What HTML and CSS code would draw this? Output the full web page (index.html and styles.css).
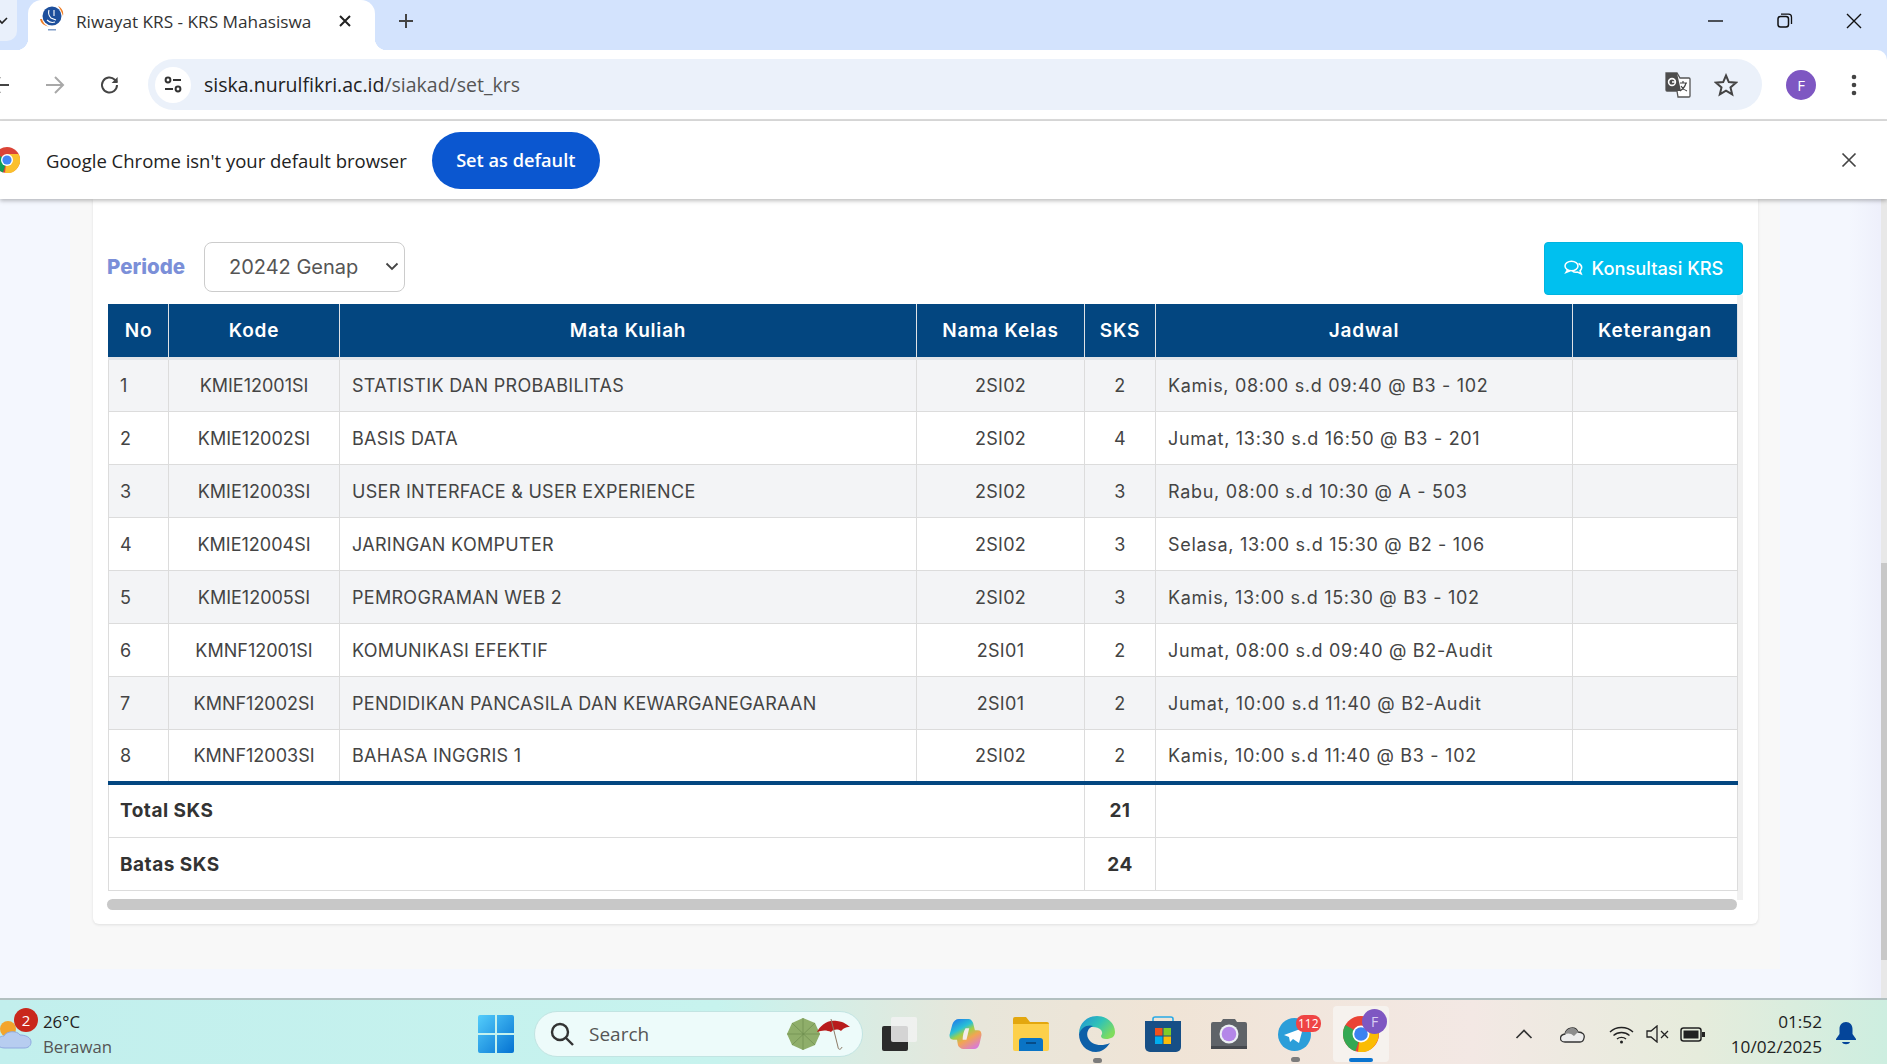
FILE: index.html
```html
<!DOCTYPE html>
<html lang="en">
<head>
    <meta charset="UTF-8">
    <title>Riwayat KRS - KRS Mahasiswa</title>
    <link rel="stylesheet" href="styles.css">
</head>
<body>

<div class="tabstrip">
    <div class="tab-prev"><svg width="12" height="12" viewBox="0 0 12 12"><path d="M-3 3l5 5 5-5" fill="none" stroke="#222" stroke-width="1.6"/></svg></div>
    <div class="tab">
        <svg class="favicon" width="24" height="26" viewBox="0 0 24 26">
            <circle cx="12" cy="10" r="9.5" fill="#1d4f9c"/>
            <path d="M2 13c1 4 4 7 8 8-5-1-9-3-10-8zM18 0c4 2 6 6 5 10-1-3-2-6-5-10z" fill="#ee7b22"/>
            <path d="M9 4c-1 3 0 6 2 8l5 2M14 4v6M7 14c2 2 5 3 8 2" fill="none" stroke="#fff" stroke-width="1.1"/>
            <rect x="8" y="23" width="8" height="1.5" fill="#7f9cc8"/>
        </svg>
        <span class="tab-title">Riwayat KRS - KRS Mahasiswa</span>
        <svg class="tab-close" width="14" height="14" viewBox="0 0 14 14"><path d="M2 2l10 10M12 2L2 12" stroke="#222" stroke-width="2"/></svg>
    </div>
    <svg class="new-tab" width="18" height="18" viewBox="0 0 18 18"><path d="M9 2v14M2 9h14" stroke="#444" stroke-width="2"/></svg>
    <div class="win-controls">
        <svg width="16" height="16" viewBox="0 0 16 16"><path d="M0 8h15" stroke="#111" stroke-width="1.4"/></svg>
        <svg width="16" height="16" viewBox="0 0 16 16"><rect x="1" y="3.5" width="10.5" height="10.5" rx="2.5" fill="none" stroke="#111" stroke-width="1.5"/><path d="M4 1.2h7.5a3 3 0 0 1 3 3V11" fill="none" stroke="#111" stroke-width="1.3"/></svg>
        <svg width="16" height="16" viewBox="0 0 16 16"><path d="M1 1l14 14M15 1L1 15" stroke="#111" stroke-width="1.4"/></svg>
    </div>
</div>

<div class="toolbar">
    <svg class="nav-back" width="22" height="22" viewBox="0 0 22 22"><path d="M-8 11H9M0 3l-8 8 8 8" fill="none" stroke="#444" stroke-width="2"/></svg>
    <svg class="nav-fwd" width="22" height="22" viewBox="0 0 22 22"><path d="M2 11h17M11 3l8 8-8 8" fill="none" stroke="#a8a8a8" stroke-width="2"/></svg>
    <svg class="nav-reload" width="22" height="22" viewBox="0 0 22 22"><path d="M18 11a7.5 7.5 0 1 1-2.2-5.3L18 8" fill="none" stroke="#444" stroke-width="2"/><path d="M18.6 3v6h-6z" fill="#444"/></svg>
    <div class="omnibox">
        <div class="site-info">
            <svg width="20" height="20" viewBox="0 0 20 20" fill="none" stroke="#333" stroke-width="2"><circle cx="5" cy="5" r="2.4"/><path d="M10 5h8M2 14h8"/><circle cx="15" cy="14" r="2.4"/></svg>
        </div>
        <div class="url">siska.nurulfikri.ac.id<span class="url-path">/siakad/set_krs</span></div>
        <svg class="translate" width="26" height="26" viewBox="0 0 26 26">
            <path d="M1 1h11l3 5h9a1 1 0 0 1 1 1v17a1 1 0 0 1-1 1H13l-1-6H2a1 1 0 0 1-1-1z" fill="#fff" stroke="#555" stroke-width="1.3"/>
            <path d="M1 1h11l4 18H2a1 1 0 0 1-1-1z" fill="#4d4d4d"/>
            <circle cx="7" cy="10" r="3.4" fill="none" stroke="#fff" stroke-width="1.6"/>
            <path d="M7 10h3.4" stroke="#fff" stroke-width="1.5"/>
            <path d="M15 11h7M18 9v2M21 11c-1 4-3 6-6 8M16 14c1 2 3 4 6 5" fill="none" stroke="#444" stroke-width="1.2"/>
        </svg>
        <svg class="star" width="24" height="24" viewBox="0 0 24 24"><path d="M12 2.5l2.8 6.6 7.2.6-5.5 4.7 1.7 7-6.2-3.7-6.2 3.7 1.7-7L2 9.7l7.2-.6z" fill="none" stroke="#444" stroke-width="2"/></svg>
    </div>
    <div class="avatar">F</div>
    <svg class="kebab" width="6" height="24" viewBox="0 0 6 24"><circle cx="3" cy="4" r="2.3" fill="#444"/><circle cx="3" cy="12" r="2.3" fill="#444"/><circle cx="3" cy="20" r="2.3" fill="#444"/></svg>
</div>

<div class="infobar">
    <svg class="chrome-logo" width="26" height="26" viewBox="0 0 26 26">
        <circle cx="13" cy="13" r="13" fill="#db4437"/>
        <path d="M13 13L1.7 6.500A13 13 0 0 0 9 25.400z" fill="#0f9d58"/>
        <path d="M13 7h11.500A13 13 0 0 1 11 26z" fill="#fbc02d"/>
        <circle cx="13" cy="13" r="6" fill="#fff"/>
        <circle cx="13" cy="13" r="4.600" fill="#4285f4"/>
    </svg>
    <span class="infobar-text">Google Chrome isn't your default browser</span>
    <button class="btn-default">Set as default</button>
    <svg class="infobar-close" width="16" height="16" viewBox="0 0 16 16"><path d="M1.500 1.500l13 13M14.500 1.500l-13 13" stroke="#444" stroke-width="1.700"/></svg>
</div>

<div class="page">
    <div class="panel">
        <div class="card">
            <div class="filter-row">
                <label class="periode-label">Periode</label>
                <div class="select-wrap">
                    <select class="periode-select">
                        <option>20242 Genap</option>
                    </select>
                    <svg class="select-arrow" width="14" height="9" viewBox="0 0 14 9"><path d="M1.500 1.500L7 7l5.500-5.500" fill="none" stroke="#444" stroke-width="1.800"/></svg>
                </div>
                <button class="btn-konsultasi">
                    <svg width="19" height="16" viewBox="0 0 19 16" fill="none" stroke="#fff" stroke-width="1.500"><ellipse cx="7.500" cy="6" rx="6.500" ry="4.800"/><path d="M3.500 9.800L2 12.500l4-1.800"/><path d="M14.500 3.500c2.300 1 3.500 3 3 5-.3 1-.9 1.800-1.500 2.300l1.200 3-3.800-1.700c-1.800.4-3.700 0-5-1"/></svg>
                    Konsultasi KRS
                </button>
            </div>
            <div class="table-scroll">
                <table class="krs-table">
                    <colgroup>
                        <col class="c-no"><col class="c-kode"><col class="c-mk"><col class="c-kelas"><col class="c-sks"><col class="c-jadwal"><col class="c-ket">
                    </colgroup>
                    <thead>
                        <tr><th>No</th><th>Kode</th><th>Mata Kuliah</th><th>Nama Kelas</th><th>SKS</th><th>Jadwal</th><th>Keterangan</th></tr>
                    </thead>
                    <tbody>
                        <tr><td>1</td><td class="kode">KMIE12001SI</td><td>STATISTIK DAN PROBABILITAS</td><td class="center">2SI02</td><td class="center">2</td><td class="jadwal">Kamis, 08:00 s.d 09:40 @ B3 - 102</td><td></td></tr>
                        <tr><td>2</td><td class="kode">KMIE12002SI</td><td>BASIS DATA</td><td class="center">2SI02</td><td class="center">4</td><td class="jadwal">Jumat, 13:30 s.d 16:50 @ B3 - 201</td><td></td></tr>
                        <tr><td>3</td><td class="kode">KMIE12003SI</td><td>USER INTERFACE &amp; USER EXPERIENCE</td><td class="center">2SI02</td><td class="center">3</td><td class="jadwal">Rabu, 08:00 s.d 10:30 @ A - 503</td><td></td></tr>
                        <tr><td>4</td><td class="kode">KMIE12004SI</td><td>JARINGAN KOMPUTER</td><td class="center">2SI02</td><td class="center">3</td><td class="jadwal">Selasa, 13:00 s.d 15:30 @ B2 - 106</td><td></td></tr>
                        <tr><td>5</td><td class="kode">KMIE12005SI</td><td>PEMROGRAMAN WEB 2</td><td class="center">2SI02</td><td class="center">3</td><td class="jadwal">Kamis, 13:00 s.d 15:30 @ B3 - 102</td><td></td></tr>
                        <tr><td>6</td><td class="kode">KMNF12001SI</td><td>KOMUNIKASI EFEKTIF</td><td class="center">2SI01</td><td class="center">2</td><td class="jadwal">Jumat, 08:00 s.d 09:40 @ B2-Audit</td><td></td></tr>
                        <tr><td>7</td><td class="kode">KMNF12002SI</td><td>PENDIDIKAN PANCASILA DAN KEWARGANEGARAAN</td><td class="center">2SI01</td><td class="center">2</td><td class="jadwal">Jumat, 10:00 s.d 11:40 @ B2-Audit</td><td></td></tr>
                        <tr><td>8</td><td class="kode">KMNF12003SI</td><td>BAHASA INGGRIS 1</td><td class="center">2SI02</td><td class="center">2</td><td class="jadwal">Kamis, 10:00 s.d 11:40 @ B3 - 102</td><td></td></tr>
                    </tbody>
                    <tfoot>
                        <tr><td colspan="4"><b>Total SKS</b></td><td class="center"><b>21</b></td><td colspan="2"></td></tr>
                        <tr><td colspan="4"><b>Batas SKS</b></td><td class="center"><b>24</b></td><td colspan="2"></td></tr>
                    </tfoot>
                </table>
                <div class="hscroll"></div>
            </div>
        </div>
    </div>
    <div class="vscroll"><div class="vscroll-thumb"></div></div>
</div>

<div class="taskbar">
    <div class="weather">
        <svg class="weather-icon" width="36" height="40" viewBox="0 0 36 40">
            <circle cx="10" cy="13" r="8" fill="#f3a52c"/>
            <path d="M7 32c-6 0-8-3-8-6s3-6 7-6c2-5 13-6 16-1 5 0 11 2 11 7 0 4-3 6-7 6z" fill="#b7cdf0" stroke="#8fa9e0"/>
        </svg>
        <span class="weather-badge">2</span>
        <div class="weather-text">
            <div class="weather-temp">26°C</div>
            <div class="weather-desc">Berawan</div>
        </div>
    </div>
    <div class="task-center">
        <svg class="win-logo" width="36" height="38" viewBox="0 0 36 38">
            <defs><linearGradient id="wl" x1="0" y1="0" x2="1" y2="1"><stop offset="0" stop-color="#54cdfb"/><stop offset="1" stop-color="#0472d2"/></linearGradient></defs>
            <path d="M2 0h15v18H0V2a2 2 0 0 1 2-2zM19 0h15a2 2 0 0 1 2 2v16H19zM0 20h17v18H2a2 2 0 0 1-2-2zM19 20h17v16a2 2 0 0 1-2 2H19z" fill="url(#wl)"/>
        </svg>
        <div class="searchbox">
            <svg width="24" height="24" viewBox="0 0 24 24" fill="none" stroke="#333" stroke-width="2.4"><circle cx="10" cy="10" r="8"/><path d="M16 16l7 7"/></svg>
            <span class="search-label">Search</span>
            <svg class="umbrellas" width="66" height="34" viewBox="0 0 66 34">
                <path d="M16 1l12 5 5 11-5 11-12 5-11-5-5-11 5-11z" fill="#8fae6a"/>
                <path d="M16 1v32M0 17h33M5 6l23 22M28 6L5 28" stroke="#6d8c4e" stroke-width=".7"/>
                <path d="M30 15c3-6 10-13 20-11 8 1 10 4 13 6-5 0-7 2-9 4-3-2-7-2-10 1-4-2-9-2-14 0z" fill="#b81c1c"/>
                <path d="M44 2l7 28c0 3 3 3 4 0" fill="none" stroke="#8c7a66" stroke-width="1"/>
            </svg>
        </div>
        <svg class="task-icon" width="35" height="34" viewBox="0 0 35 34">
            <rect x="0" y="9" width="26" height="25" rx="2" fill="#2b2b2b"/>
            <rect x="9" y="0" width="26" height="25" rx="2" fill="#f2f2f2" opacity=".85"/>
        </svg>
        <svg class="task-icon copilot" width="33" height="32" viewBox="0 0 34 34">
            <defs><linearGradient id="cp" x1=".2" y1="0" x2=".8" y2="1"><stop offset="0" stop-color="#1f7fe8"/><stop offset=".3" stop-color="#2ac1d6"/><stop offset=".45" stop-color="#9fd04a"/><stop offset=".65" stop-color="#f2a552"/><stop offset="1" stop-color="#d877e0"/></linearGradient></defs>
            <path d="M10 1h10c3 0 4 2 5 4l2 8h3c3 0 4 2 4 5l-2 9c-1 4-3 6-6 6H15c-3 0-5-2-6-4l-1-6H4c-3 0-4-2-4-5l3-11C4 3 7 1 10 1z" fill="url(#cp)"/>
            <path d="M17 11c-2 3-3 8-3 12h4c1-4 2-8 3-12z" fill="#f3ecec"/>
        </svg>
        <svg class="task-icon" width="36" height="34" viewBox="0 0 36 34">
            <path d="M0 2a2 2 0 0 1 2-2h11l4 5h17a2 2 0 0 1 2 2v6H0z" fill="#e3a70f"/>
            <path d="M0 7h36v25a2 2 0 0 1-2 2H2a2 2 0 0 1-2-2z" fill="#fdd04b"/>
            <path d="M6 24a3 3 0 0 1 3-3h18a3 3 0 0 1 3 3v10H6z" fill="#0a74c5"/>
            <path d="M13 26h10" stroke="#063f73" stroke-width="1.5"/>
        </svg>
        <div class="task-slot">
            <svg width="36" height="36" viewBox="0 0 36 36">
                <defs><linearGradient id="ed" x1="0" y1="0" x2="1" y2=".6"><stop offset="0" stop-color="#1f8fd8"/><stop offset=".55" stop-color="#30c3b6"/><stop offset="1" stop-color="#7fdc5e"/></linearGradient></defs>
                <path d="M0 18C0 7 8 0 18 0c10 0 18 7 18 16 0 5-4 7-9 7-3 0-5-1-5-3 1-2 2-3 0-6-4-5-18-4-22 4z" fill="url(#ed)"/>
                <path d="M0 18c2-7 9-10 14-8-5 2-7 7-5 12 3 7 13 9 22 5-4 6-9 9-14 9C7 36 0 28 0 18z" fill="#0c5fa8"/>
            </svg>
            <span class="running-dot"></span>
        </div>
        <svg class="task-icon" width="36" height="36" viewBox="0 0 36 36">
            <path d="M8 9V3a2 2 0 0 1 2-2h16a2 2 0 0 1 2 2v6" fill="none" stroke="#29a9e6" stroke-width="1.6"/>
            <path d="M0 5h36v26a5 5 0 0 1-5 5H5a5 5 0 0 1-5-5z" fill="#174f86"/>
            <rect x="10" y="12" width="7.5" height="7.5" fill="#f1511b"/><rect x="18.5" y="12" width="7.5" height="7.5" fill="#80cc28"/>
            <rect x="10" y="20.5" width="7.5" height="7.5" fill="#00adef"/><rect x="18.5" y="20.5" width="7.5" height="7.5" fill="#fbbc09"/>
        </svg>
        <svg class="task-icon" width="36" height="30" viewBox="0 0 36 30">
            <path d="M0 5a2 2 0 0 1 2-2h8l2-3h12l2 3h8a2 2 0 0 1 2 2v25H0z" fill="#5f6368"/>
            <rect x="0" y="27" width="36" height="3" fill="#45484d"/>
            <circle cx="18" cy="15" r="9.5" fill="#eceff3"/>
            <circle cx="18" cy="15" r="7.3" fill="#b486e8"/>
        </svg>
        <div class="task-slot telegram">
            <svg width="33" height="33" viewBox="0 0 33 33">
                <circle cx="16.5" cy="16.5" r="16.5" fill="#2b9ed9"/>
                <path d="M6 17l19-7-4 15-6-4-3 3-1-5z" fill="#fff"/>
            </svg>
            <span class="count-badge">112</span>
            <span class="running-dot"></span>
        </div>
        <div class="task-slot active">
            <svg width="36" height="36" viewBox="0 0 36 36">
                <circle cx="18" cy="18" r="18" fill="#ea4335"/>
                <path d="M18 18L2.4 9A18 18 0 0 0 12.5 35.2z" fill="#34a853"/>
                <path d="M18 10h15.600A18 18 0 0 1 15 36z" fill="#fbbc04"/>
                <circle cx="18" cy="18" r="8.5" fill="#fff"/>
                <circle cx="18" cy="18" r="6.8" fill="#3b82f0"/>
            </svg>
            <span class="profile-badge">F</span>
            <span class="active-bar"></span>
        </div>
    </div>
    <div class="tray">
        <svg width="18" height="10" viewBox="0 0 18 10"><path d="M1.5 9L9 1.5 16.5 9" fill="none" stroke="#333" stroke-width="1.7"/></svg>
        <svg class="tray-cloud" width="25" height="17" viewBox="0 0 25 17"><path d="M5 16c-6 0-6-7 0-8 1-6 10-9 13-2 5 0 7 3 6 6-.5 3-2 4-4 4z" fill="#ededed" stroke="#333" stroke-width="1.3"/><path d="M5 8c1-6 10-9 13-2l-4 4c-3-3-6-3-9-2z" fill="#8d8d8d"/></svg>
        <svg class="tray-wifi" width="25" height="19" viewBox="0 0 25 19" fill="none" stroke="#222" stroke-width="1.4"><path d="M1 7c6-6 17-6 23 0M4.5 10.500c4.500-4 11.500-4 16 0M8 14c2.500-2.200 6.500-2.200 9 0"/><circle cx="12.5" cy="17" r="1.5" fill="#222" stroke="none"/></svg>
        <svg class="tray-vol" width="24" height="18" viewBox="0 0 24 18" fill="none" stroke="#222" stroke-width="1.3"><path d="M1 6v6h4l6 5V1L5 6z"/><path d="M15 6l7 7M22 6l-7 7"/></svg>
        <svg class="tray-batt" width="25" height="15" viewBox="0 0 25 15"><rect x="1" y="1" width="20" height="13" rx="2.5" fill="none" stroke="#222" stroke-width="1.5"/><rect x="3.5" y="3.5" width="15" height="8" fill="#222"/><rect x="22" y="5" width="3" height="5" fill="#222"/></svg>
        <div class="clock">
            <div>01:52</div>
            <div>10/02/2025</div>
        </div>
        <svg class="bell" width="20" height="24" viewBox="0 0 20 24"><path d="M10 0c4 0 6.500 3 6.500 7v5l3.500 5v1H0v-1l3.500-5V7C3.500 3 6 0 10 0z" fill="#04459a"/><path d="M6 20h8c-1 3-7 3-8 0z" fill="#04459a"/></svg>
    </div>
</div>

</body>
</html>
```

FILE: styles.css
```css
* {
    box-sizing: border-box;
}

html, body {
    margin: 0;
    height: 100%;
    overflow: hidden;
}

body {
    display: flex;
    flex-direction: column;
    width: 1887px;
    height: 1064px;
    background: #d3e3fd;
    font-family: "Open Sans", sans-serif;
    color: #222;
}

/* browser chrome */
.tabstrip {
    height: 50px;
    flex: none;
    background: #d3e3fd;
    display: flex;
    align-items: center;
}

.tab-prev {
    width: 17px;
    height: 41px;
    margin-right: 11px;
    margin-top: -9px;
    background: #e9f0fb;
    border-radius: 0 0 10px 0;
    display: flex;
    align-items: center;
}

.tab {
    width: 347px;
    height: 50px;
    background: #fff;
    border-radius: 14px 14px 0 0;
    display: flex;
    align-items: center;
    padding: 0 18px 8px 12px;
    position: relative;
}

.tab::before,
.tab::after {
    content: "";
    position: absolute;
    bottom: 0;
    width: 12px;
    height: 12px;
}

.tab::before {
    right: 100%;
    background: radial-gradient(circle at 0 0, transparent 12px, #fff 12.5px);
}

.tab::after {
    left: 100%;
    background: radial-gradient(circle at 100% 0, transparent 12px, #fff 12.5px);
}

.favicon {
    margin-top: -4px;
}

.tab-title {
    margin-left: 12px;
    font-size: 17.2px;
    width: 237px;
    white-space: nowrap;
    color: #333;
}

.tab-close {
    margin-left: 25px;
}

.new-tab {
    margin-left: 22px;
    margin-top: -9px;
}

.win-controls {
    margin-left: auto;
    padding-right: 25px;
    margin-top: -9px;
    display: flex;
    gap: 53px;
}

.toolbar {
    height: 71px;
    flex: none;
    background: #fff;
    border-bottom: 2px solid #dbdbdb;
    border-top-right-radius: 10px;
    display: flex;
    align-items: center;
}

.nav-fwd {
    margin-left: 22px;
}

.nav-reload {
    margin-left: 33px;
}

.omnibox {
    margin-left: 27px;
    width: 1614px;
    height: 51px;
    background: #ebf1fa;
    border-radius: 26px;
    display: flex;
    align-items: center;
    padding: 0 24px 0 7px;
}

.site-info {
    width: 36px;
    height: 36px;
    background: #fff;
    border-radius: 50%;
    display: flex;
    align-items: center;
    justify-content: center;
}

.url {
    margin-left: 13px;
    font-size: 19.5px;
    color: #222;
}

.url-path {
    color: #555;
}

.translate {
    margin-left: auto;
}

.star {
    margin-left: 23px;
}

.avatar {
    width: 30px;
    height: 30px;
    margin-left: 24px;
    border-radius: 50%;
    background: #7e57c2;
    color: #fff;
    font-size: 15px;
    display: flex;
    align-items: center;
    justify-content: center;
}

.kebab {
    margin-left: 35px;
}

.infobar {
    height: 78px;
    flex: none;
    background: #fff;
    box-shadow: 0 2px 4px rgba(0, 0, 0, 0.25);
    display: flex;
    align-items: center;
    position: relative;
    z-index: 2;
}

.chrome-logo {
    margin-left: -6px;
}

.infobar-text {
    margin-left: 26px;
    font-size: 18.5px;
    color: #222;
}

.btn-default {
    margin-left: 25px;
    width: 168px;
    height: 57px;
    border: none;
    border-radius: 29px;
    background: #0b57d0;
    color: #fff;
    font-family: "Open Sans", sans-serif;
    font-size: 18.2px;
    font-weight: 600;
}

.infobar-close {
    margin-left: auto;
    margin-right: 30px;
}

/* page */
.page {
    flex: 1;
    min-height: 0;
    background: linear-gradient(to right, #f4f7fe 98%, #eef0fb 99.6%);
    display: flex;
    font-family: Inter, sans-serif;
    color: #444;
}

.panel {
    width: 1710px;
    height: 770px;
    margin-left: 70px;
    padding: 0 22px 0 23px;
    background: #f8f8f8;
}

.card {
    height: 725px;
    background: #fff;
    border-radius: 0 0 6px 6px;
    box-shadow: 0 1px 3px rgba(0, 0, 0, 0.1);
    padding: 43px 15px 0 15px;
}

.filter-row {
    display: flex;
    align-items: center;
    height: 53px;
}

.periode-label {
    width: 96px;
    margin-left: -1px;
    font-size: 20.5px;
    font-weight: 800;
    color: #7b8fd8;
    margin-top: -5px;
}

.select-wrap {
    position: relative;
    margin-left: 1px;
    margin-top: -3px;
    display: flex;
}

.periode-select {
    width: 201px;
    height: 50px;
    padding-left: 24px;
    appearance: none;
    border: 1px solid #ccc;
    border-radius: 8px;
    background: #fff;
    color: #555;
    font-family: Inter, sans-serif;
    font-size: 20px;
}

.select-arrow {
    position: absolute;
    right: 6px;
    top: 20px;
    pointer-events: none;
}

.btn-konsultasi {
    margin-left: auto;
    width: 199px;
    height: 53px;
    border: 1px solid #00b4e0;
    border-radius: 4px;
    background: #00c0ef;
    color: #fff;
    font-family: Inter, sans-serif;
    font-size: 18.3px;
    font-weight: 500;
    display: flex;
    align-items: center;
    justify-content: center;
    gap: 9px;
    padding-bottom: 2px;
}

.table-scroll {
    width: 1635px;
    height: 605px;
    padding-top: 9px;
    background: linear-gradient(to left, #f1f1f1 6px, #fff 6px);
}

.krs-table {
    width: 1629px;
    table-layout: fixed;
    border-collapse: collapse;
    font-size: 18px;
    letter-spacing: 0.3px;
}

.c-no { width: 60px; }
.c-kode { width: 171px; }
.c-mk { width: 577px; }
.c-kelas { width: 168px; }
.c-sks { width: 71px; }
.c-jadwal { width: 417px; }
.c-ket { width: 165px; }

.krs-table th {
    height: 54px;
    padding-bottom: 3px;
    background: #034680;
    color: #fff;
    font-weight: 600;
    font-size: 19px;
    letter-spacing: 0.8px;
    border: 1px solid #dee2e6;
    border-top-color: #034680;
    border-bottom: 3px solid #e2e4e8;
}

.krs-table th:first-child {
    border-left-color: #034680;
}

.krs-table td {
    height: 53px;
    padding: 0 12px;
    border: 1px solid #dcdcdc;
    white-space: nowrap;
}

.krs-table td:first-child {
    padding-left: 11px;
}

.krs-table td.jadwal {
    letter-spacing: 0.7px;
}

.krs-table td.kode {
    text-align: center;
    letter-spacing: 0;
}

.krs-table tbody tr:nth-child(odd) {
    background: #f3f4f6;
}

.krs-table tfoot tr:first-child td {
    height: 55px;
    border-top: 4px solid #034680;
}

.krs-table tfoot b {
    font-weight: 700;
    font-size: 19px;
    letter-spacing: 0.5px;
    color: #333;
}

.center {
    text-align: center;
}

.hscroll {
    width: 1630px;
    height: 11px;
    margin-top: 8px;
    margin-left: -1px;
    border-radius: 6px;
    background: #c8c8c8;
}

.vscroll {
    width: 6px;
    margin-left: auto;
    background: #e8e8e8;
}

.vscroll-thumb {
    height: 397px;
    margin-top: 364px;
    background: #c8c8c8;
}

/* taskbar */
.taskbar {
    height: 66px;
    flex: none;
    border-top: 2px solid #b2c0c0;
    padding-top: 4px;
    background: linear-gradient(to right, #c2efed 0%, #c7f3ee 38%, #e8e6da 52%, #f0e4d6 62%, #f3e8e4 78%, #e6ecdc 90%, #cdeee0 100%);
    display: flex;
    align-items: center;
}

.weather {
    width: 460px;
    height: 100%;
    flex: none;
    display: flex;
    align-items: center;
    position: relative;
}

.weather-icon {
    margin-left: -2px;
    margin-top: 4px;
}

.weather-badge {
    position: absolute;
    left: 14px;
    top: 4px;
    width: 24px;
    height: 24px;
    border-radius: 50%;
    background: #c9281c;
    color: #fff;
    font-size: 15px;
    display: flex;
    align-items: center;
    justify-content: center;
}

.weather-text {
    margin-left: 9px;
    font-size: 16.8px;
    line-height: 25px;
}

.weather-desc {
    color: #555;
}

.task-center {
    display: flex;
    align-items: center;
    gap: 30px;
    margin-left: 18px;
}

.win-logo {
    margin-right: -10px;
}

.searchbox {
    width: 329px;
    height: 46px;
    margin-right: -11px;
    background: #edfbfa;
    border: 1px solid #c2e4e2;
    border-radius: 23px;
    display: flex;
    align-items: center;
    padding: 0 9px 0 15px;
}

.search-label {
    margin-left: 15px;
    font-size: 19px;
    color: #555;
}

.umbrellas {
    margin-left: auto;
}

.copilot {
    margin-left: 2px;
    margin-right: 1px;
}

.task-slot {
    position: relative;
    display: flex;
}

.telegram {
    margin-left: 1px;
    margin-right: 2px;
}

.count-badge {
    position: absolute;
    left: 18px;
    top: -3px;
    padding: 0 2px;
    height: 17px;
    border-radius: 8px;
    background: #ef4444;
    color: #fff;
    font-size: 12px;
    line-height: 17px;
}

.running-dot {
    position: absolute;
    left: 50%;
    bottom: -11px;
    width: 9px;
    height: 5px;
    margin-left: -4px;
    border-radius: 3px;
    background: #7c7c7c;
}

.task-slot.active {
    padding: 10px;
    margin: -10px;
    background: #f6f2ee;
    border-radius: 4px;
}

.profile-badge {
    position: absolute;
    right: 2px;
    top: 3px;
    width: 25px;
    height: 25px;
    border-radius: 50%;
    background: #7e57c2;
    color: #d9cdf2;
    font-size: 14px;
    display: flex;
    align-items: center;
    justify-content: center;
}

.active-bar {
    position: absolute;
    left: 16px;
    bottom: 0;
    width: 24px;
    height: 4px;
    border-radius: 2px;
    background: #0a74d0;
}

.tray {
    margin-left: auto;
    display: flex;
    align-items: center;
    padding-right: 31px;
}

.tray-cloud {
    margin-left: 27px;
}

.tray-wifi {
    margin-left: 24px;
}

.tray-vol {
    margin-left: 12px;
}

.tray-batt {
    margin-left: 10px;
}

.clock {
    margin-left: 26px;
    text-align: right;
    font-size: 17.2px;
    line-height: 25px;
}

.bell {
    margin-left: 14px;
}
```
